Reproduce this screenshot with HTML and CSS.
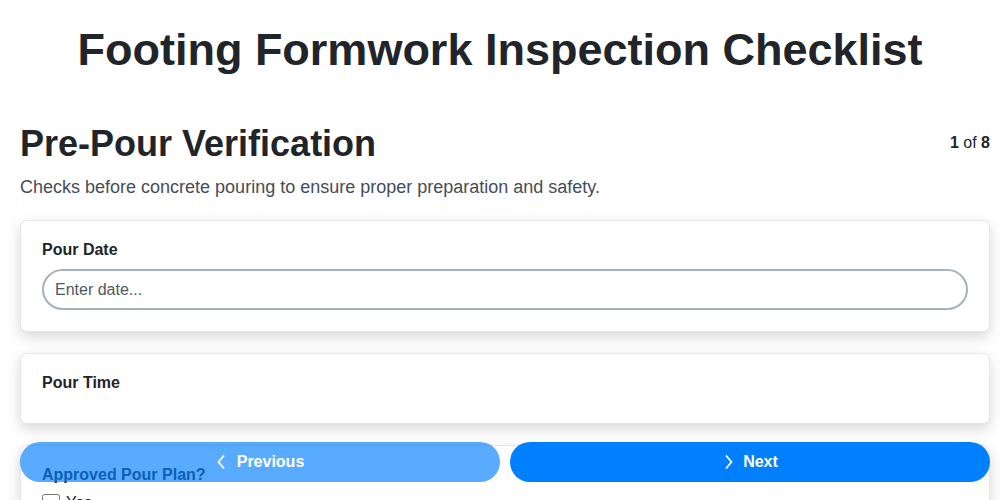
FILE: index.html
```html
<!DOCTYPE html>
<html lang="en">
<head>
  <meta charset="UTF-8" />
  <meta name="viewport" content="width=device-width, initial-scale=1.0" />
  <title>Footing Formwork Inspection Checklist</title>
  <link rel="stylesheet" href="styles.css">
</head>
<body>
  <h1 class="page-title">Footing Formwork Inspection Checklist</h1>

  <div class="section">
    <div class="section-head">
      <h2>Pre-Pour Verification</h2>
      <span class="step"><b>1</b> of <b>8</b></span>
    </div>
    <p class="section-desc">Checks before concrete pouring to ensure proper preparation and safety.</p>

    <div class="card">
      <label class="field-label">Pour Date</label>
      <input class="text-input" type="text" placeholder="Enter date...">
    </div>

    <div class="card card-short">
      <label class="field-label">Pour Time</label>
    </div>

    <div class="card">
      <label class="field-label">Approved Pour Plan?</label>
      <label class="check"><input type="checkbox"> Yes</label>
    </div>
  </div>

  <div class="nav-buttons">
    <button class="nav-btn prev">
      <svg width="12" height="16" viewBox="0 0 12 16"><path d="M8 1.5 L2.5 8 L8 14.5" fill="none" stroke="#fff" stroke-width="1.8"/></svg>
      Previous
    </button>
    <button class="nav-btn next">
      <svg width="12" height="16" viewBox="0 0 12 16"><path d="M4 1.5 L9.5 8 L4 14.5" fill="none" stroke="#fff" stroke-width="1.8"/></svg>
      Next
    </button>
  </div>
</body>
</html>
```

FILE: styles.css
```css
body {
  margin: 0;
  font-family: 'Liberation Sans', Arial, sans-serif;
  background: #fff;
  color: #212529;
}
.page-title {
  text-align: center;
  font-size: 45px;
  font-weight: bold;
  margin: 25px 0 46px;
  line-height: 50px;
}
.section {
  margin: 0 10px 0 20px;
}
.section-head {
  display: flex;
  justify-content: space-between;
  align-items: baseline;
}
.section-head h2 {
  margin: 0;
  font-size: 36px;
  line-height: 46px;
}
.step {
  font-size: 16px;
  color: #212529;
  position: relative;
  top: -8px;
}
.section-desc {
  margin: 10px 0 22px;
  font-size: 18px;
  line-height: 21px;
  color: #454d57;
}
.card {
  background: #fff;
  border: 1px solid #e6e6ec;
  border-radius: 7px;
  box-shadow: 0 5px 14px rgba(0, 0, 0, 0.16);
  padding: 20px 21px 21px;
  margin-bottom: 21px;
}
.card-short {
  padding-bottom: 21px;
}
.field-label {
  display: block;
  font-size: 16px;
  font-weight: bold;
  margin-bottom: 10px;
  line-height: 18px;
}
.text-input {
  box-sizing: border-box;
  width: 100%;
  height: 41px;
  border: 2px solid #a8b1ba;
  border-radius: 21px;
  padding: 0 11px;
  font-family: inherit;
  font-size: 16px;
  color: #212529;
}
.text-input::placeholder {
  color: #4f5862;
}
.check {
  display: flex;
  align-items: center;
  gap: 6px;
  font-size: 16px;
}
.check input {
  width: 18px;
  height: 18px;
  margin: 0;
}
.nav-buttons {
  position: fixed;
  left: 20px;
  right: 10px;
  top: 442px;
  display: flex;
  gap: 10px;
}
.nav-btn {
  flex: 1;
  height: 40px;
  border: none;
  border-radius: 20px;
  background: #007fff;
  color: #fff;
  font-family: inherit;
  font-size: 16px;
  font-weight: bold;
  display: flex;
  align-items: center;
  justify-content: center;
  gap: 9px;
}
.nav-btn.prev {
  opacity: 0.65;
}
```
